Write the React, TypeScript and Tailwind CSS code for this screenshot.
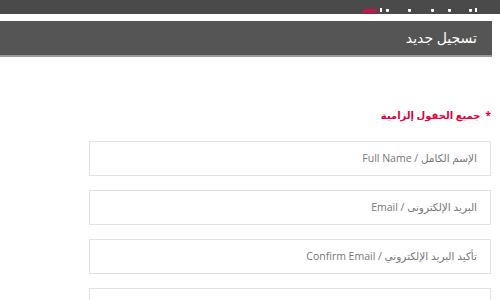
import React from 'react';

const fields = [
  'الإسم الكامل / Full Name',
  'البريد الإلكترونى / Email',
  'تأكيد البريد الإلكتروني / Confirm Email',
  '',
];

// bits of the menu text that peek out below the viewport top
const nubs = [3, 18, 14, 20, 19];

export default function App() {
  return (
    <div
      dir="rtl"
      className="w-[500px] h-[300px] overflow-hidden bg-white"
      style={{ fontFamily: '"Open Sans", "DejaVu Sans", sans-serif' }}
    >
      {/* top nav, cut off by the viewport */}
      <div className="h-[14px] bg-[#4a4a4a] flex items-end pr-[23px]">
        <span className="w-[2px] h-[4px] bg-white mb-[2px]" />
        {nubs.map((g, i) => (
          <span key={i} className="w-[3px] h-[3px] bg-white mb-[2px] rounded-b-[1px]" style={{ marginRight: g }} />
        ))}
        <span className="mr-[4px] w-[2px] h-[4px] bg-white mb-[2px]" />
        <span className="mr-[3px] w-[15px] h-[4px] bg-[#c8144b] rounded-tl-[8px] mb-[1px]" />
      </div>

      <div className="mt-[7px] mr-[8px] h-[36px] bg-[#555555] border-b-2 border-[#9a9a9a] flex items-center pr-[15px]">
        <h2 className="text-white text-[14px] leading-none">تسجيل جديد</h2>
      </div>

      <div className="pr-[9px] pl-[89px] pt-[53px]">
        <p className="text-[#e4003a] text-[10px] font-bold leading-none mb-[21px]">
          <span className="ml-[5px]">*</span>جميع الحقول إلزامية
        </p>
        <div className="flex flex-col gap-[14px]">
          {fields.map((f, i) => (
            <div
              key={i}
              className="h-[35px] border border-[#e3e3e3] flex items-center pr-[13px] text-[10.5px] text-[#777777]"
            >
              {f}
            </div>
          ))}
        </div>
      </div>
    </div>
  );
}
